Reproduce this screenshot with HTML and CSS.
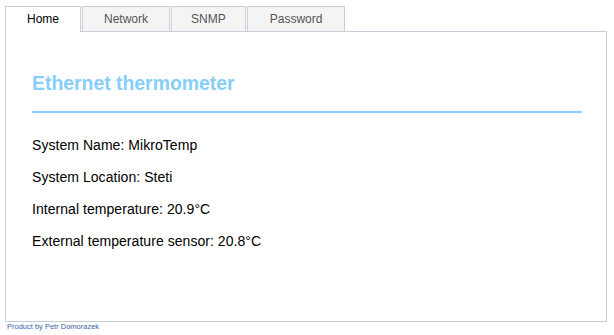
FILE: index.html
```
<!DOCTYPE html>
<html>
<head>
<meta charset="utf-8">
<link rel="stylesheet" href="styles.css">
</head>
<body>
<div class="page">
  <div class="tabs">
    <a class="tab active">Home</a>
    <a class="tab">Network</a>
    <a class="tab tab-narrow">SNMP</a>
    <a class="tab tab-wide">Password</a>
  </div>
  <div class="panel">
    <h1 class="title">Ethernet thermometer</h1>
    <div class="info">
      <p>System Name: MikroTemp</p>
      <p>System Location: Steti</p>
      <p>Internal temperature: 20.9°C</p>
      <p>External temperature sensor: 20.8°C</p>
    </div>
  </div>
  <div class="footer">Product by Petr Domorazek</div>
</div>
</body>
</html>
```
FILE: styles.css
```
html, body {
  margin: 0;
  padding: 0;
  background: #ffffff;
}
body {
  font-family: "Liberation Sans", Arial, sans-serif;
  color: #000;
}
.page {
  padding: 6px 7px 0 5px;
}
.tabs {
  display: flex;
  align-items: flex-end;
  gap: 1px;
}
.tab {
  display: block;
  height: 24px;
  line-height: 25px;
  padding: 0 21px;
  border: 1px solid #c8cdd9;
  border-bottom: none;
  background: #f4f4f5;
  color: #555555;
  font-size: 12px;
  text-align: center;
}
.tab-narrow {
  padding: 0 19px;
}
.tab-wide {
  padding: 0 22px;
}
.tab.active {
  background: #ffffff;
  color: #000000;
  height: 25px;
  margin-bottom: -1px;
  position: relative;
  z-index: 1;
}
.panel {
  box-sizing: border-box;
  height: 291px;
  border: 1px solid #c8cdd9;
  padding: 40px 24px 0 26px;
}
.title {
  margin: 0;
  font-size: 19.4px;
  line-height: 22px;
  font-weight: bold;
  color: #87cefa;
  padding-bottom: 17px;
  border-bottom: 2px solid #87cefa;
}
.info {
  margin-top: 23px;
  display: flex;
  flex-direction: column;
  gap: 14px;
}
.info p {
  margin: 0;
  font-size: 14px;
  line-height: 18px;
  letter-spacing: 0.05px;
}
.footer {
  padding-left: 2px;
  font-size: 7.5px;
  line-height: 9px;
  color: #3d64a5;
}
```
